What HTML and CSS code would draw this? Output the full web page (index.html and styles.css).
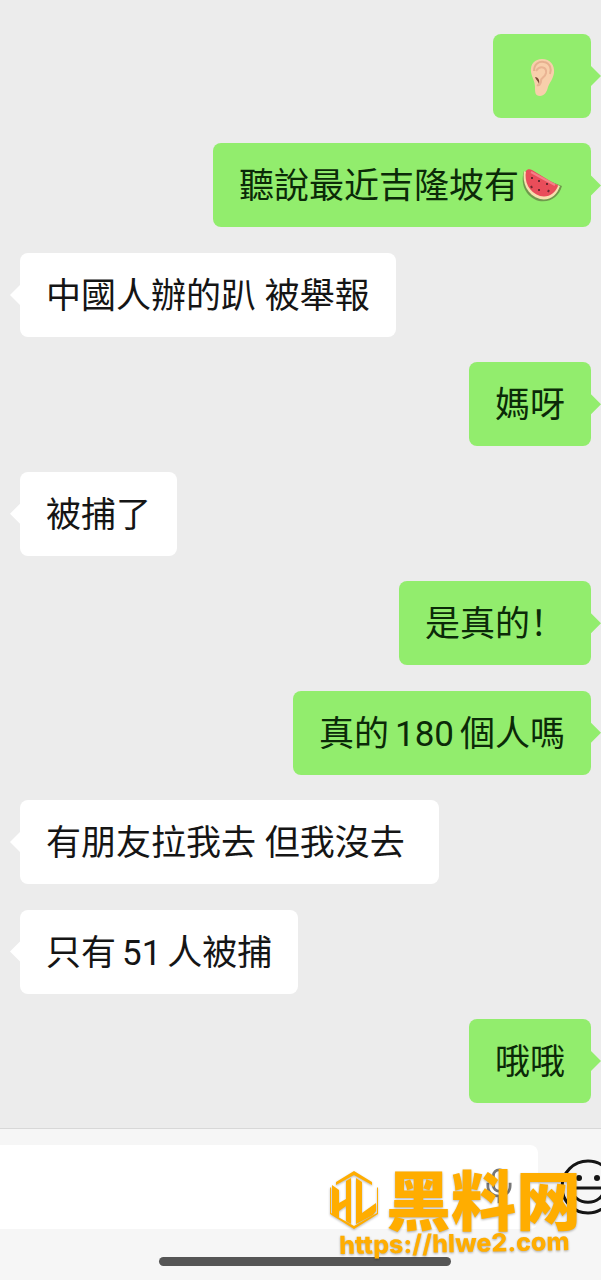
FILE: index.html
```
<!DOCTYPE html>
<html lang="zh-Hans">
<head>
    <meta charset="UTF-8">
    <meta name="viewport" content="width=device-width, initial-scale=1.0">
    <title>聊天</title>
    <link rel="stylesheet" href="styles.css">
</head>
<body>
    <main class="chat">
        <div class="bubble me">
            <svg class="emoji" viewBox="0 0 46 46" role="img" aria-label="耳">
                <path d="M12 17C11 9 16 4 23 4c8 0 13 6 12 14-1 6-4 9-6 14-1 5-4 9-8 9-5 0-5-4-5-9 0-6-3-9-4-15z" fill="#f8cfab"/>
                <path d="M15 16c0-7 5-10 10-9 6 1 8 7 6 12" fill="none" stroke="#e6b08f" stroke-width="2"/>
                <path d="M17 16c4-6 11-4 10 2-1 5-5 4-5 8 0 3-2 5-4 4" fill="none" stroke="#e9b393" stroke-width="2"/>
                <path d="M16 22c3 0 5 3 4 7-1-3-3-4-4-7z" fill="#7d4a35"/>
            </svg>
        </div>
        <div class="bubble me">聽說最近吉隆坡有<svg class="emoji" viewBox="0 0 46 46" role="img" aria-label="西瓜">
                <path d="M5 7C1 19 6 33 20 37c12 2 20-5 23-15z" fill="#6f9a4c"/>
                <path d="M5 7C3 19 8 31 21 35c10 2 17-4 20-13z" fill="#f7dfae"/>
                <path d="M7 7C5 18 10 28 21 32c9 2 15-3 18-10 0-1-1-2-3-2L13 6c-2-1-5-1-6 1z" fill="#e94d5a"/>
                <path d="M12 8l24 13" stroke="#f58088" stroke-width="2"/>
                <path d="M13 13v2M20 16v2M12 22l1 2M20 25v2M28 19v2M30 26l-1 2" stroke="#6d2730" stroke-width="2"/>
            </svg></div>
        <div class="bubble other">中國人辦的趴 被舉報</div>
        <div class="bubble me">媽呀</div>
        <div class="bubble other">被捕了</div>
        <div class="bubble me">是真的！</div>
        <div class="bubble me">真的<span class="num">180</span>個人嗎</div>
        <div class="bubble other">有朋友拉我去 但我沒去&nbsp;</div>
        <div class="bubble other">只有<span class="num">51</span>人被捕</div>
        <div class="bubble me">哦哦</div>
    </main>

    <footer class="footer">
        <form class="composer">
            <div class="field">
                <input type="text" class="field-input" aria-label="訊息">
                <button type="button" class="mic" aria-label="語音">
                    <svg viewBox="0 0 28 40" fill="none" stroke="#777" stroke-width="3">
                        <rect x="8" y="2" width="13" height="23" rx="6"/>
                        <path d="M2 16v3c0 15 24 15 24 0v-3M14 31v7"/>
                    </svg>
                </button>
            </div>
            <button type="button" class="smile" aria-label="表情">
                <svg viewBox="0 0 56 56" fill="none" stroke="#151515" stroke-width="3">
                    <circle cx="28" cy="28" r="26"/>
                    <path d="M12 29h32c0 19-32 19-32 0z"/>
                    <circle cx="19" cy="19" r="3" fill="#151515" stroke="none"/>
                    <circle cx="37" cy="19" r="3" fill="#151515" stroke="none"/>
                </svg>
            </button>
        </form>
        <div class="home-bar"></div>

        <div class="watermark">
            <div class="brand">
                <svg class="logo" viewBox="0 0 48 58" fill="#ffad00">
                    <path d="M24 0l18 11v3L24 4 6 14v-3z"/>
                    <path d="M1 16v26l23 13 23-13V16l1 1v26L24 58 0 43V17z"/>
                    <path d="M2 14l7 5v13l7-4V10l5-3v46l-5-3V35l-7 5v7l-7-4z"/>
                    <path d="M26 7l6 4v31l14-10v8l-3 4-17 9z"/>
                </svg>
                <span class="brand-name">黑料网</span>
            </div>
            <a class="brand-link" href="https://hlwe2.com">https://hlwe2.com</a>
        </div>
    </footer>
</body>
</html>
```
FILE: styles.css
```
* { margin: 0; padding: 0; box-sizing: border-box; }
body {
    display: flex;
    flex-direction: column;
    min-height: 100vh;
    background: #ececec;
    color: #151515;
    font-family: Roboto, "Noto Sans CJK SC", sans-serif;
    overflow-x: hidden;
}
button {
    background: none;
    border: none;
    cursor: pointer;
}
svg { display: block; }

/* messages */
.chat {
    flex: 1;
    display: flex;
    flex-direction: column;
    justify-content: space-between;
    align-items: flex-start;
    gap: 24px;
    padding: 34px 10px 25px 20px;
}
.bubble {
    position: relative;
    display: flex;
    align-items: center;
    min-height: 84px;
    padding: 18px 26px 14px;
    border-radius: 8px;
    background: #fff;
    font-size: 35px;
    line-height: 52px;
    white-space: pre-wrap;
}
.bubble::after {
    content: "";
    position: absolute;
    top: 50%;
    left: -10px;
    width: 11px;
    height: 22px;
    margin-top: -11px;
    background: inherit;
    clip-path: polygon(100% 0, 100% 100%, 0 50%);
}
.me {
    align-self: flex-end;
    background: #92ed6d;
    color: #0b2a08;
}
.me::after {
    left: auto;
    right: -10px;
    clip-path: polygon(0 0, 0 100%, 100% 50%);
}
.num { margin: 0 6px; }
.emoji {
    width: 46px;
    height: 46px;
}

/* input bar */
.footer {
    position: relative;
    padding: 16px 0 14px;
    border-top: 1px solid #d8d8d8;
    background: #f6f6f6;
    overflow: hidden;
}
.composer {
    display: flex;
    align-items: center;
    gap: 22px;
    margin-right: -15px;
}
.field {
    flex: 1;
    display: flex;
    align-items: center;
    min-width: 0;
    padding-right: 26px;
    border-radius: 0 8px 8px 0;
    background: #fff;
}
.field-input {
    flex: 1;
    min-width: 0;
    height: 84px;
    padding: 0 20px;
    border: none;
    outline: none;
    background: transparent;
    font-size: 35px;
}
.mic { width: 26px; }
.smile {
    flex: none;
    width: 56px;
}
.home-bar {
    width: 292px;
    height: 9px;
    margin: 28px auto 0;
    border-radius: 5px;
    background: #555;
    position: relative;
    left: 4px;
}

/* site mark laid over the input bar */
.watermark {
    position: absolute;
    top: 42px;
    right: 20px;
    color: #ffad00;
    filter: drop-shadow(0 1px 1px rgba(0, 0, 0, 0.3));
}
.brand {
    display: flex;
    align-items: flex-start;
    gap: 8px;
}
.logo {
    width: 48px;
    height: 58px;
}
.brand-name {
    font-family: "Noto Sans CJK SC", sans-serif;
    font-size: 65px;
    font-weight: 900;
    line-height: 52px;
}
.brand-link {
    display: block;
    margin-left: 9px;
    color: inherit;
    font-family: Inter, sans-serif;
    font-size: 25px;
    font-weight: 800;
    line-height: 28px;
    text-decoration: none;
    transform: rotate(-1deg);
}
```
